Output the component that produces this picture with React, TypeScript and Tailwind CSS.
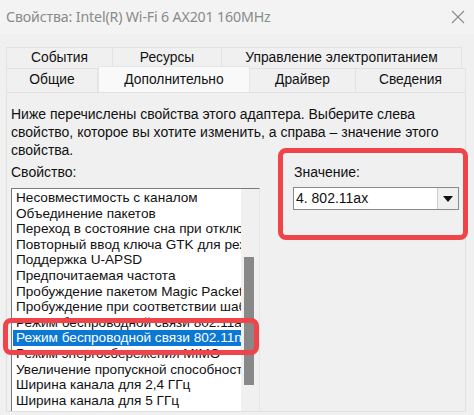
import React from "react";

const items = [
  "Несовместимость с каналом",
  "Объединение пакетов",
  "Переход в состояние сна при отключении",
  "Повторный ввод ключа GTK для режима",
  "Поддержка U-APSD",
  "Предпочитаемая частота",
  "Пробуждение пакетом Magic Packet",
  "Пробуждение при соответствии шаблону",
  "Режим беспроводной связи 802.11a/b/g",
  "Режим беспроводной связи 802.11n/ac/ax",
  "Режим энергосбережения MIMO",
  "Увеличение пропускной способности",
  "Ширина канала для 2,4 ГГц",
  "Ширина канала для 5 ГГц",
];

export default function App() {
  return (
    <div className="relative w-[474px] h-[415px] overflow-hidden bg-[#f0f0f0] font-['Liberation_Sans',Arial,sans-serif] text-[14px] text-[#111]">
      {/* Title bar */}
      <div className="h-[34px] flex items-center justify-between pl-[6px] pr-[8px] bg-[#f3f3f3]">
        <span className="font-['Noto_Sans',sans-serif] text-[14.2px] text-[#8a8a8a] tracking-[-0.15px]">
          Свойства: Intel(R) Wi-Fi 6 AX201 160MHz
        </span>
        <svg width="14" height="14" viewBox="0 0 14 14" className="mr-[1px]">
          <path d="M1 1 L13 13 M13 1 L1 13" stroke="#8a8a8a" strokeWidth="1.1" fill="none" />
        </svg>
      </div>

      {/* Tabs */}
      <div className="mt-[13px] ml-[6px] text-[13.8px]">
        <div className="flex h-[21px]">
          <div className="w-[107px] flex items-center justify-center border border-b-0 border-[#e2e2e2] bg-[#f0f0f0]">События</div>
          <div className="w-[109px] flex items-center justify-center border border-b-0 border-l-0 border-[#e2e2e2] bg-[#f0f0f0]">Ресурсы</div>
          <div className="w-[240px] flex items-center justify-center border border-b-0 border-l-0 border-[#e2e2e2] bg-[#f0f0f0]">Управление электропитанием</div>
        </div>
        <div className="flex h-[24px] items-end">
          <div className="w-[92px] h-[24px] flex items-center justify-center border border-[#e2e2e2] border-b-0 bg-[#f0f0f0]">Общие</div>
          <div className="w-[152px] h-[26px] -mt-[2px] flex items-start pt-[3px] justify-center bg-[#f9f9f9] border border-b-0 border-[#e6e6e6]">Дополнительно</div>
          <div className="w-[106px] h-[24px] flex items-center justify-center border border-l-0 border-b-0 border-[#e2e2e2] bg-[#f0f0f0]">Драйвер</div>
          <div className="w-[110px] h-[24px] flex items-center justify-center border border-l-0 border-b-0 border-[#e2e2e2] bg-[#f0f0f0]">Сведения</div>
        </div>
      </div>

      {/* Panel */}
      <div className="ml-[6px] w-[460px] h-[320px] border border-[#e0e0e0] bg-[#f0f0f0] flex flex-col px-[4px]">
        <p className="mt-[12px] leading-[18px] text-[14px] text-[#111]">
          Ниже перечислены свойства этого адаптера. Выберите слева
          <br />
          свойство, которое вы хотите изменить, а справа – значение этого
          <br />
          свойства.
        </p>
        <div className="flex mt-[4px]">
          <div className="flex flex-col">
            <div className="h-[18px] leading-[18px]">Свойство:</div>
            <div className="mt-[7px] w-[249px] h-[223px] flex bg-white border-t border-l border-[#7a7a7a] border-r border-r-[#e6e6e6] overflow-hidden text-[13.6px]">
              <div className="flex-1 flex flex-col pt-[1px] pl-[1px] overflow-hidden">
                {items.map((t, i) => (
                  <div
                    key={i}
                    className={
                      i === 9
                        ? "h-[15.6px] leading-[15.6px] pl-[3px] whitespace-nowrap overflow-hidden bg-[#0a78d4] text-white"
                        : "h-[15.6px] leading-[15.6px] pl-[3px] whitespace-nowrap overflow-hidden"
                    }
                  >
                    {t}
                  </div>
                ))}
              </div>
              <div className="w-[18px] bg-[#f0f0f0] pt-[68px] pl-[3px]">
                <div className="w-[10px] h-[128px] bg-[#888888]" />
              </div>
            </div>
          </div>
          <div className="flex flex-col ml-[33px]">
            <div className="h-[18px] leading-[18px] ml-[1px]">Значение:</div>
            <div className="mt-[6px] w-[166px] h-[23px] flex bg-white border border-[#8a8a8a]">
              <div className="flex-1 flex items-center pl-[2px]">4. 802.11ax</div>
              <div className="w-[21px] flex items-center justify-center bg-[#f0f0f0] border-l border-[#cfcfcf]">
                <svg width="10" height="6" viewBox="0 0 10 6">
                  <path d="M0 0 L10 0 L5 6 Z" fill="#111" />
                </svg>
              </div>
            </div>
          </div>
        </div>
      </div>

      {/* Red highlight overlays */}
      <div className="absolute left-[3px] top-[318px] w-[256px] h-[37px] border-[5px] border-[#ef4449] rounded-[8px]" />
      <div className="absolute left-[278px] top-[148px] w-[190px] h-[92px] border-[5px] border-[#ef4449] rounded-[8px]" />
    </div>
  );
}
